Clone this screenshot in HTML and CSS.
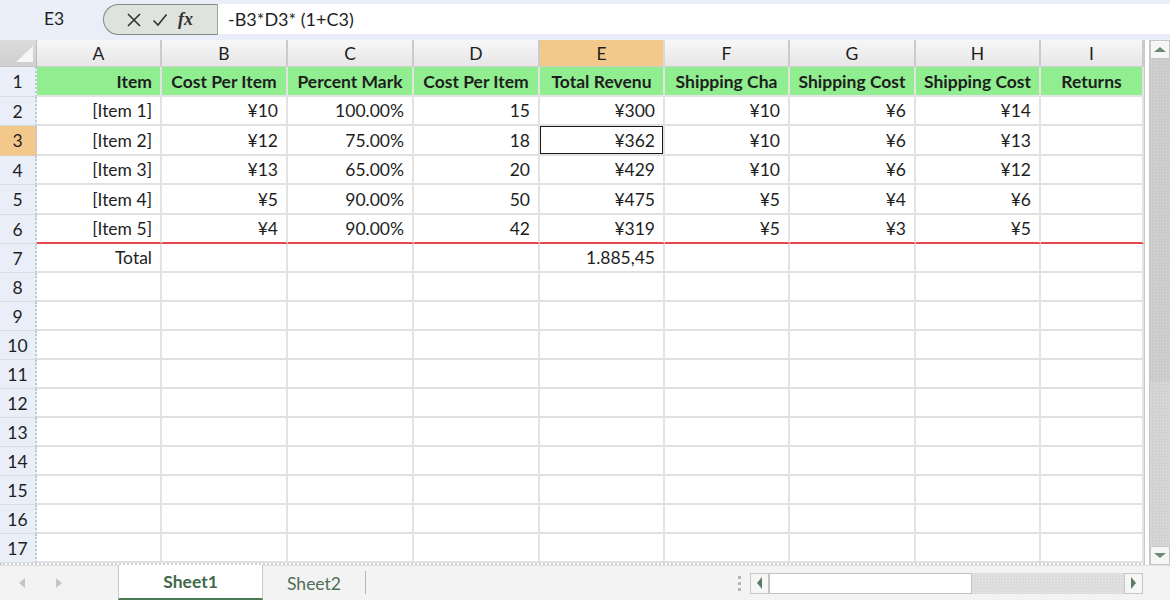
FILE: index.html
```html
<!DOCTYPE html>
<html>
<head>
<meta charset="utf-8">
<link rel="stylesheet" href="styles.css">
</head>
<body>
<div class="app">
  <div class="fbar">
    <div class="namebox">E3</div>
    <div class="pill">
      <svg class="ico" width="18" height="18" viewBox="0 0 18 18"><path d="M3 3 L15 15 M15 3 L3 15" stroke="#333" stroke-width="1.6" fill="none"/></svg>
      <svg class="ico" width="18" height="18" viewBox="0 0 18 18"><path d="M2.5 9.5 L7 14 L15.5 3.5" stroke="#333" stroke-width="1.6" fill="none"/></svg>
      <span class="fx">fx</span>
    </div>
    <div class="formula">-B3*D3* (1+C3)</div>
  </div>
  <div class="main">
    <div class="sheet">
      <div class="corner"><span class="tri"></span></div>
      <div class="ch">A</div><div class="ch">B</div><div class="ch">C</div><div class="ch">D</div><div class="ch sel">E</div><div class="ch">F</div><div class="ch">G</div><div class="ch">H</div><div class="ch">I</div>

      <div class="rh">1</div>
      <div class="c hd r">Item</div><div class="c hd">Cost Per Item</div><div class="c hd">Percent Mark</div><div class="c hd">Cost Per Item</div><div class="c hd">Total Revenu</div><div class="c hd">Shipping Cha</div><div class="c hd">Shipping Cost</div><div class="c hd">Shipping Cost</div><div class="c hd">Returns</div>

      <div class="rh">2</div>
      <div class="c">[Item 1]</div><div class="c">¥10</div><div class="c">100.00%</div><div class="c">15</div><div class="c">¥300</div><div class="c">¥10</div><div class="c">¥6</div><div class="c">¥14</div><div class="c"></div>

      <div class="rh sel">3</div>
      <div class="c">[Item 2]</div><div class="c">¥12</div><div class="c">75.00%</div><div class="c">18</div><div class="c active">¥362</div><div class="c">¥10</div><div class="c">¥6</div><div class="c">¥13</div><div class="c"></div>

      <div class="rh">4</div>
      <div class="c">[Item 3]</div><div class="c">¥13</div><div class="c">65.00%</div><div class="c">20</div><div class="c">¥429</div><div class="c">¥10</div><div class="c">¥6</div><div class="c">¥12</div><div class="c"></div>

      <div class="rh">5</div>
      <div class="c">[Item 4]</div><div class="c">¥5</div><div class="c">90.00%</div><div class="c">50</div><div class="c">¥475</div><div class="c">¥5</div><div class="c">¥4</div><div class="c">¥6</div><div class="c"></div>

      <div class="rh">6</div>
      <div class="c red">[Item 5]</div><div class="c red">¥4</div><div class="c red">90.00%</div><div class="c red">42</div><div class="c red">¥319</div><div class="c red">¥5</div><div class="c red">¥3</div><div class="c red">¥5</div><div class="c red"></div>

      <div class="rh">7</div>
      <div class="c">Total</div><div class="c"></div><div class="c"></div><div class="c"></div><div class="c">1.885,45</div><div class="c"></div><div class="c"></div><div class="c"></div><div class="c"></div>

      <div class="rh">8</div>
      <div class="c"></div><div class="c"></div><div class="c"></div><div class="c"></div><div class="c"></div><div class="c"></div><div class="c"></div><div class="c"></div><div class="c"></div>
      <div class="rh">9</div>
      <div class="c"></div><div class="c"></div><div class="c"></div><div class="c"></div><div class="c"></div><div class="c"></div><div class="c"></div><div class="c"></div><div class="c"></div>
      <div class="rh">10</div>
      <div class="c"></div><div class="c"></div><div class="c"></div><div class="c"></div><div class="c"></div><div class="c"></div><div class="c"></div><div class="c"></div><div class="c"></div>
      <div class="rh">11</div>
      <div class="c"></div><div class="c"></div><div class="c"></div><div class="c"></div><div class="c"></div><div class="c"></div><div class="c"></div><div class="c"></div><div class="c"></div>
      <div class="rh">12</div>
      <div class="c"></div><div class="c"></div><div class="c"></div><div class="c"></div><div class="c"></div><div class="c"></div><div class="c"></div><div class="c"></div><div class="c"></div>
      <div class="rh">13</div>
      <div class="c"></div><div class="c"></div><div class="c"></div><div class="c"></div><div class="c"></div><div class="c"></div><div class="c"></div><div class="c"></div><div class="c"></div>
      <div class="rh">14</div>
      <div class="c"></div><div class="c"></div><div class="c"></div><div class="c"></div><div class="c"></div><div class="c"></div><div class="c"></div><div class="c"></div><div class="c"></div>
      <div class="rh">15</div>
      <div class="c"></div><div class="c"></div><div class="c"></div><div class="c"></div><div class="c"></div><div class="c"></div><div class="c"></div><div class="c"></div><div class="c"></div>
      <div class="rh">16</div>
      <div class="c"></div><div class="c"></div><div class="c"></div><div class="c"></div><div class="c"></div><div class="c"></div><div class="c"></div><div class="c"></div><div class="c"></div>
      <div class="rh">17</div>
      <div class="c"></div><div class="c"></div><div class="c"></div><div class="c"></div><div class="c"></div><div class="c"></div><div class="c"></div><div class="c"></div><div class="c"></div>
    </div>
    <div class="vscroll">
      <div class="vbtn"><span class="up"></span></div>
      <div class="vthumb"></div>
      <div class="vtrack"></div>
      <div class="vbtn"><span class="down"></span></div>
    </div>
  </div>
  <div class="tabs">
    <div class="navs"><span class="nl"></span><span class="nr"></span></div>
    <div class="tab active">Sheet1</div>
    <div class="tab">Sheet2</div>
    <div class="tabsep"></div>
    <div class="spacer"></div>
    <div class="dots"><i></i><i></i><i></i></div>
    <div class="hscroll">
      <div class="hbtn"><span class="left"></span></div>
      <div class="hthumb"></div>
      <div class="htrack"></div>
      <div class="hbtn"><span class="right"></span></div>
    </div>
    <div class="hend"></div>
  </div>
</div>
</body>
</html>
```

FILE: styles.css
```css
* { box-sizing: border-box; }
html, body { margin: 0; padding: 0; }
body {
  width: 1170px;
  height: 600px;
  overflow: hidden;
  font-family: Lato, "Liberation Sans", sans-serif;
  font-size: 17.5px;
  color: #1e1e1e;
  background: #ffffff;
}
.app { display: flex; flex-direction: column; width: 1170px; height: 600px; }

/* formula bar */
.fbar {
  height: 40px;
  flex: none;
  background: #e9eef8;
  display: flex;
  align-items: flex-start;
  padding-top: 4px;
}
.namebox {
  width: 103px;
  height: 30px;
  line-height: 30px;
  padding-left: 44px;
}
.pill {
  width: 115px;
  height: 31px;
  border: 1.5px solid #7e8c7e;
  border-right: 1px solid #9aa49a;
  border-radius: 16px 0 0 16px;
  background: #dfe3dd;
  display: flex;
  align-items: center;
  padding-left: 21px;
  gap: 8px;
}
.ico { display: block; }
.fx {
  font-family: "Liberation Serif", serif;
  font-style: italic;
  font-weight: bold;
  font-size: 18px;
  margin-left: 1px;
  color: #333;
}
.formula {
  flex: 1;
  height: 30px;
  background: #ffffff;
  line-height: 30px;
  padding-left: 10px;
  font-size: 18px;
}

/* main area */
.main {
  display: flex;
  height: 525px;
  flex: none;
  background: #ffffff;
}
.sheet {
  width: 1145px;
  display: grid;
  grid-template-columns: 37px 125px 126px 126px 126px 125px 125px 126px 125px 103px;
  grid-template-rows: 27px 30px 29px 30px 29px 30px 29px repeat(11, 29px);
  border-right: 2px solid #c9c9c9;
  border-bottom: 2px dotted #cfcfcf;
  align-content: start;
}
.corner {
  background: linear-gradient(#dcdcdc, #cfcfcf);
  border-right: 1px solid #bdbdbd;
  border-bottom: 1px solid #c4c4c4;
  position: relative;
}
.tri {
  position: absolute;
  right: 3px;
  bottom: 4px;
  width: 0;
  height: 0;
  border-left: 17px solid transparent;
  border-bottom: 16px solid #f6f6f6;
}
.ch {
  background: linear-gradient(#f7f7f7, #e6e6e6);
  border-right: 2px solid #cbcbcb;
  border-bottom: 1px solid #cfcfcf;
  display: flex;
  align-items: center;
  justify-content: center;
}
.ch.sel { background: #f2c98a; border-right-color: #d9d9d9; }
.rh {
  background: #e9eef9;
  border-right: 2px dotted #c4c8d0;
  border-bottom: 1px dotted #c9cdd6;
  display: flex;
  align-items: center;
  justify-content: center;
}
.rh.sel { background: #f2c98a; }
.c {
  border-right: 2px solid #e3e3e3;
  border-bottom: 2px solid #e1e1e5;
  display: flex;
  align-items: center;
  justify-content: flex-end;
  padding-right: 8px;
  white-space: nowrap;
  overflow: hidden;
}
.c.hd {
  background: #90ee90;
  font-weight: bold;
  justify-content: center;
  padding: 0;
  border-bottom: 2px solid #e4e4e4;
}
.c.hd.r { justify-content: flex-end; padding-right: 8px; }
.c.red { border-bottom: 2px solid #e8474c; }
.c.active { box-shadow: inset 0 0 0 1px #1a1a1a; padding-right: 8px; }

/* vertical scrollbar */
.vscroll {
  width: 21px;
  margin-left: 4px;
  display: flex;
  flex-direction: column;
  background: #e4e4e4;
  border-left: 1px solid #c7c7c7;
}
.vbtn {
  height: 19px;
  background: #f6f6f6;
  border: 1px solid #c6c6c6;
  display: flex;
  align-items: center;
  justify-content: center;
  flex: none;
}
.up { width: 0; height: 0; border-left: 6px solid transparent; border-right: 6px solid transparent; border-bottom: 5px solid #6f8a74; }
.down { width: 0; height: 0; border-left: 6px solid transparent; border-right: 6px solid transparent; border-top: 5px solid #6f8a74; }
.vthumb {
  height: 323px;
  flex: none;
  background-color: #cbcbcb;
  background-image: radial-gradient(#dadada 0.6px, transparent 0.8px);
  background-size: 3px 3px;
}
.vtrack {
  flex: 1;
  background-color: #d2d2d2;
  background-image: radial-gradient(#e2e2e2 0.6px, transparent 0.8px);
  background-size: 3px 3px;
}

/* tabs */
.tabs {
  flex: 1;
  display: flex;
  align-items: stretch;
  background: #f3f3f3;
  border-top: 1px solid #e0e0e0;
}
.navs {
  width: 118px;
  display: flex;
  align-items: center;
  padding-left: 19px;
  gap: 31px;
}
.nl { width: 0; height: 0; border-top: 5px solid transparent; border-bottom: 5px solid transparent; border-right: 6px solid #c4c4c4; }
.nr { width: 0; height: 0; border-top: 5px solid transparent; border-bottom: 5px solid transparent; border-left: 6px solid #c4c4c4; }
.tab {
  display: flex;
  align-items: center;
  justify-content: center;
  color: #4e6e56;
  width: 102px;
}
.tab.active {
  width: 145px;
  background: #ffffff;
  border-left: 1px solid #c9c9c9;
  border-right: 1px solid #c9c9c9;
  border-bottom: 2px solid #4b7a57;
  margin-top: -1px;
  font-weight: bold;
  color: #3f6a4a;
}
.tabsep { width: 1px; background: #b5b5b5; margin: 5px 0 6px; }
.spacer { flex: 1; }
.dots {
  display: flex;
  flex-direction: column;
  justify-content: center;
  gap: 3px;
  width: 19px;
  align-items: center;
}
.dots i { display: block; width: 3px; height: 3px; background: #b8b8b8; }
.hscroll {
  display: flex;
  width: 393px;
  height: 21px;
  align-self: center;
  margin-left: 1px;
  background: #e0e0e0;
}
.hbtn {
  width: 19px;
  flex: none;
  background: #f6f6f6;
  border: 1px solid #c6c6c6;
  display: flex;
  align-items: center;
  justify-content: center;
}
.left { width: 0; height: 0; border-top: 6px solid transparent; border-bottom: 6px solid transparent; border-right: 5px solid #5f7a64; }
.right { width: 0; height: 0; border-top: 6px solid transparent; border-bottom: 6px solid transparent; border-left: 5px solid #5f7a64; }
.hthumb {
  width: 203px;
  flex: none;
  background: #ffffff;
  border: 1px solid #c2c2c2;
}
.htrack {
  flex: 1;
  background-color: #dcdcdc;
  background-image: radial-gradient(#eaeaea 0.6px, transparent 0.8px);
  background-size: 3px 3px;
}
.hend { width: 27px; }
```
